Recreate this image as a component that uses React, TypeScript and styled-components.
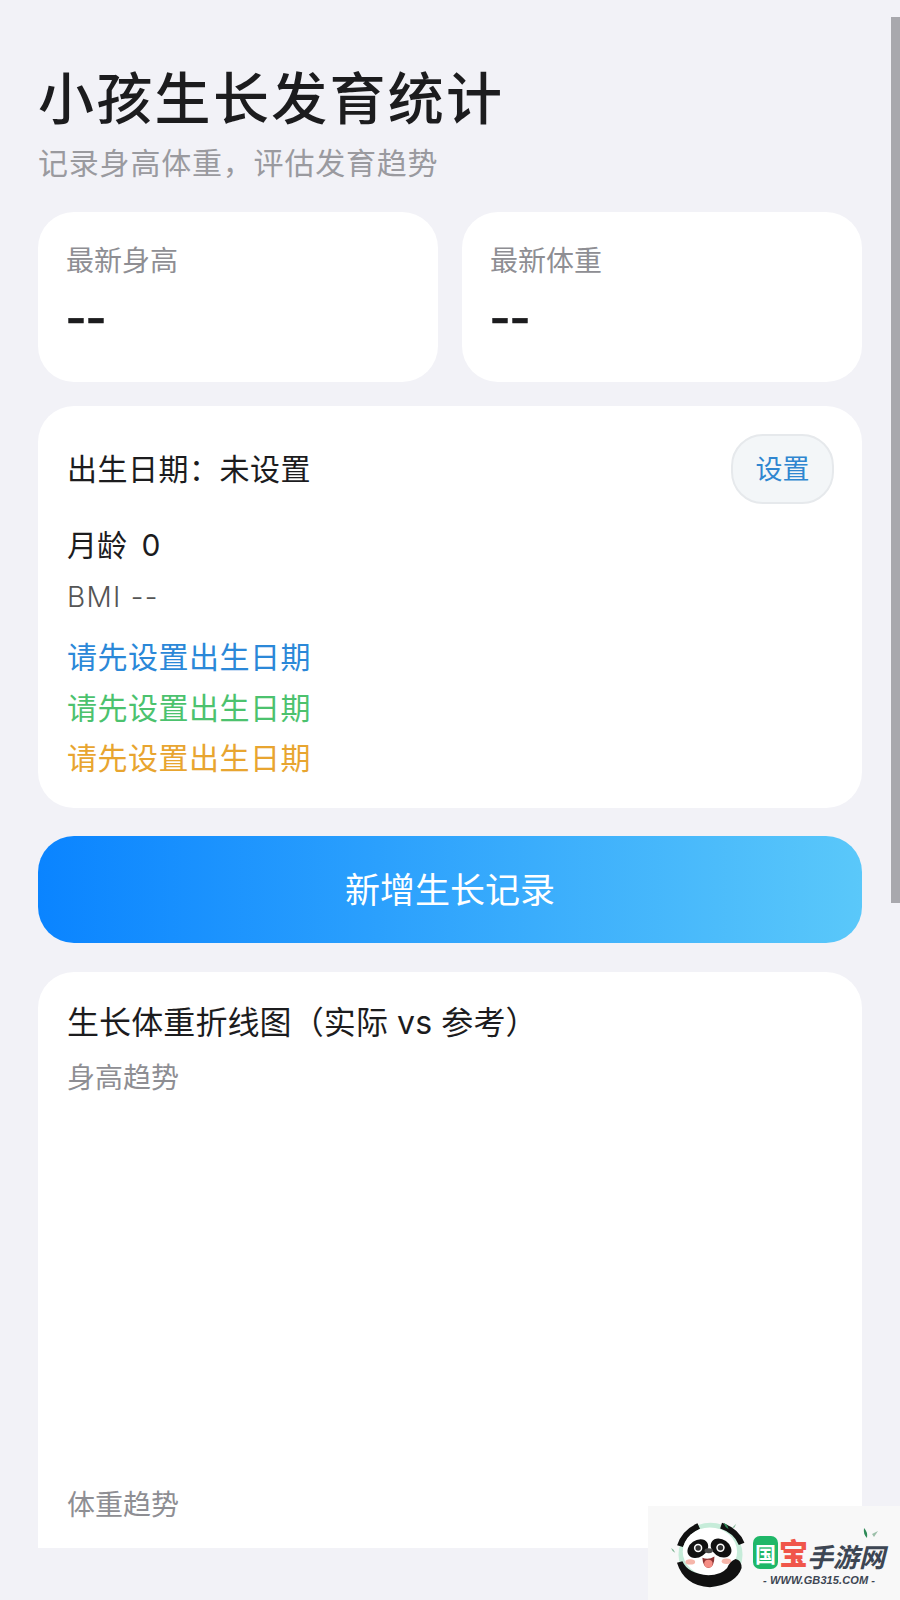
import React from 'react';
import styled, { createGlobalStyle } from 'styled-components';

const GlobalStyle = createGlobalStyle`
    html, body {
        margin: 0;
        padding: 0;
        height: 1600px;
        overflow: hidden;
        background: #f2f2f7;
    }
    * {
        box-sizing: border-box;
    }
`;

const FONT = `"Noto Sans CJK SC", "Noto Sans", sans-serif`;
const LATIN_FONT = `Inter, "Noto Sans CJK SC", sans-serif`;

const Page = styled.div`
    position: relative;
    width: 900px;
    height: 1600px;
    overflow: hidden;
    padding: 62px 38px 0;
    font-family: ${FONT};
    background: #f2f2f7;
`;

const Title = styled.h1`
    margin: 0;
    font-size: 56px;
    line-height: 66px;
    letter-spacing: 2.3px;
    font-weight: 500;
    color: #1c1c1e;
`;

const Subtitle = styled.div`
    margin-top: 13px;
    font-size: 30px;
    line-height: 40px;
    letter-spacing: 0.8px;
    color: #9a9a9f;
`;

const StatsRow = styled.div`
    display: grid;
    grid-template-columns: 1fr 1fr;
    gap: 24px;
    margin-top: 31px;
`;

const StatCard = styled.div`
    height: 170px;
    padding: 27px 28px;
    background: #fff;
    border-radius: 36px;
`;

const StatLabel = styled.div`
    font-size: 28px;
    line-height: 40px;
    color: #8e8e93;
`;

const StatValue = styled.div`
    margin-top: 11px;
    font-family: "Liberation Sans", sans-serif;
    font-size: 60px;
    line-height: 52px;
    font-weight: 400;
    color: #1c1c1e;
    -webkit-text-stroke: 0.6px #1c1c1e;
`;

const InfoCard = styled.div`
    margin-top: 24px;
    height: 402px;
    padding: 28px 28px 0 29px;
    background: #fff;
    border-radius: 36px;
`;

const BirthRow = styled.div`
    display: flex;
    align-items: center;
    justify-content: space-between;
    height: 70px;
`;

const BirthText = styled.div`
    margin-bottom: 4px;
    font-size: 30px;
    line-height: 42px;
    letter-spacing: 0.5px;
    color: #1c1c1e;
`;

const SetButton = styled.button`
    width: 103px;
    height: 70px;
    padding: 0 0 4px;
    font-family: ${FONT};
    font-size: 27px;
    color: #2f86d0;
    background: #f3f6f8;
    border: 2px solid #e6e9ec;
    border-radius: 32px;
`;

const AgeText = styled.div`
    margin-top: 19px;
    font-family: ${LATIN_FONT};
    font-size: 30px;
    line-height: 44px;
    word-spacing: 6px;
    color: #1c1c1e;
`;

const BmiText = styled.div`
    margin-top: 9px;
    font-family: ${LATIN_FONT};
    font-size: 28px;
    font-weight: 300;
    line-height: 42px;
    letter-spacing: 1.3px;
    color: #555;
`;

const Hints = styled.div`
    margin-top: 12px;
    display: flex;
    flex-direction: column;
`;

const Hint = styled.div<{ $color: string }>`
    font-size: 30px;
    line-height: 50.5px;
    letter-spacing: 0.5px;
    color: ${({ $color }) => $color};
`;

const AddButton = styled.button`
    display: block;
    width: 100%;
    height: 107px;
    margin-top: 28px;
    padding: 0 0 5px;
    font-family: ${FONT};
    font-size: 35px;
    color: #fff;
    background: linear-gradient(90deg, #0a84ff, #5ac8fa);
    border: none;
    border-radius: 36px;
`;

const ChartCard = styled.div`
    margin-top: 29px;
    height: 576px;
    padding: 29px 29px 0;
    background: #fff;
    border-radius: 36px 36px 0 0;
`;

const ChartTitle = styled.div`
    font-family: ${LATIN_FONT};
    font-size: 32px;
    line-height: 44px;
    font-weight: 400;
    letter-spacing: 0.1px;
    color: #1c1c1e;
`;

const ChartLabel = styled.div<{ $gap: number }>`
    margin-top: ${({ $gap }) => $gap}px;
    font-size: 28px;
    line-height: 40px;
    color: #8e8e93;
`;

const Scrollbar = styled.div`
    position: absolute;
    top: 17px;
    right: 0;
    width: 9px;
    height: 886px;
    background: #a8a8ad;
`;

const Watermark = styled.div`
    position: absolute;
    right: 0;
    bottom: 0;
    width: 252px;
    height: 94px;
    display: flex;
    align-items: flex-start;
    padding: 10px 0 0 21px;
    background: #f8f8f8;
`;

const Brand = styled.div`
    position: relative;
    display: flex;
    flex-direction: column;
    margin: 20px 0 0 4px;
`;

const BrandRow = styled.div`
    display: flex;
    align-items: center;
    height: 33px;
`;

const GuoBox = styled.span`
    display: flex;
    align-items: center;
    justify-content: center;
    width: 25px;
    height: 33px;
    font-size: 21px;
    font-weight: 700;
    color: #fff;
    background: #1fb768;
    border-radius: 7px;
`;

const Bao = styled.span`
    margin-left: 1px;
    font-size: 29px;
    line-height: 33px;
    font-weight: 900;
    color: #f0564a;
`;

const BrandName = styled.span`
    margin: 6px 0 0 -1px;
    font-size: 26px;
    line-height: 30px;
    font-weight: 700;
    font-style: italic;
    color: #3d4653;
`;

const BrandUrl = styled.div`
    margin: 4px 0 0 10px;
    font-family: "Liberation Sans", sans-serif;
    font-size: 11px;
    line-height: 14px;
    font-weight: 700;
    font-style: italic;
    letter-spacing: 0.1px;
    color: #3d4653;
    white-space: nowrap;
`;

const BrandLeaves = styled.svg`
    position: absolute;
    top: -8px;
    left: 110px;
`;

const PandaLogo = () => (
    <svg width="80" height="77" viewBox="0 0 264 255">
        <circle cx="137" cy="128" r="106" fill="#c6ecd9" />
        <path d="M36 100 Q50 55 98 33" fill="none" stroke="#111" strokeWidth="20" />
        <path d="M172 32 Q222 48 240 92" fill="none" stroke="#111" strokeWidth="20" />
        <ellipse cx="135" cy="118" rx="90" ry="80" fill="#fff" />
        <ellipse cx="95" cy="108" rx="37" ry="28" fill="#111" transform="rotate(-35 95 108)" />
        <ellipse cx="172" cy="106" rx="37" ry="28" fill="#111" transform="rotate(35 172 106)" />
        <circle cx="96" cy="106" r="14" fill="#fff" />
        <circle cx="170" cy="105" r="14" fill="#fff" />
        <circle cx="96" cy="106" r="9" fill="#333" />
        <circle cx="170" cy="105" r="9" fill="#333" />
        <ellipse cx="131" cy="115" rx="14" ry="8" fill="#4a4a4a" />
        <path d="M110 138 Q130 146 150 134 Q150 170 130 172 Q112 170 110 138 Z" fill="#8f3434" />
        <ellipse cx="130" cy="158" rx="14" ry="13" fill="#f58d84" />
        <ellipse cx="70" cy="152" rx="16" ry="9" fill="#f6b6aa" />
        <ellipse cx="190" cy="150" rx="16" ry="9" fill="#f6b6aa" />
        <path d="M26 155 L44 150 Q62 192 130 196 Q172 196 192 172 Q200 150 220 142 Q240 146 240 172 Q222 226 135 236 Q50 232 26 155 Z" fill="#111" />
        <path d="M181 22 Q194 28 197 44 Q184 38 181 22 Z" fill="#2e8b57" />
        <path d="M208 40 L222 26 L216 38 Z" fill="#7fb595" />
        <path d="M6 106 Q16 110 20 122 Q10 118 6 106 Z" fill="#7fb595" />
    </svg>
);

export default function App() {
    return (
        <Page>
            <GlobalStyle />
            <Title>小孩生长发育统计</Title>
            <Subtitle>记录身高体重，评估发育趋势</Subtitle>
            <StatsRow>
                <StatCard>
                    <StatLabel>最新身高</StatLabel>
                    <StatValue>--</StatValue>
                </StatCard>
                <StatCard>
                    <StatLabel>最新体重</StatLabel>
                    <StatValue>--</StatValue>
                </StatCard>
            </StatsRow>
            <InfoCard>
                <BirthRow>
                    <BirthText>出生日期：未设置</BirthText>
                    <SetButton>设置</SetButton>
                </BirthRow>
                <AgeText>月龄 0</AgeText>
                <BmiText>BMI --</BmiText>
                <Hints>
                    <Hint $color="#2b88d8">请先设置出生日期</Hint>
                    <Hint $color="#4cc26e">请先设置出生日期</Hint>
                    <Hint $color="#e8a530">请先设置出生日期</Hint>
                </Hints>
            </InfoCard>
            <AddButton>新增生长记录</AddButton>
            <ChartCard>
                <ChartTitle>生长体重折线图（实际 vs 参考）</ChartTitle>
                <ChartLabel $gap={11}>身高趋势</ChartLabel>
                <ChartLabel $gap={387}>体重趋势</ChartLabel>
            </ChartCard>
            <Scrollbar />
            <Watermark>
                <PandaLogo />
                <Brand>
                    <BrandRow>
                        <GuoBox>国</GuoBox>
                        <Bao>宝</Bao>
                        <BrandName>手游网</BrandName>
                    </BrandRow>
                    <BrandUrl>- WWW.GB315.COM -</BrandUrl>
                    <BrandLeaves width="16" height="14" viewBox="0 0 16 14">
                        <path d="M1 0 Q5 4 4 10 Q0 6 1 0 Z" fill="#2e8b57" />
                        <path d="M9 6 L15 3 L11 9 Z" fill="#9cbfa9" />
                    </BrandLeaves>
                </Brand>
            </Watermark>
        </Page>
    );
}
